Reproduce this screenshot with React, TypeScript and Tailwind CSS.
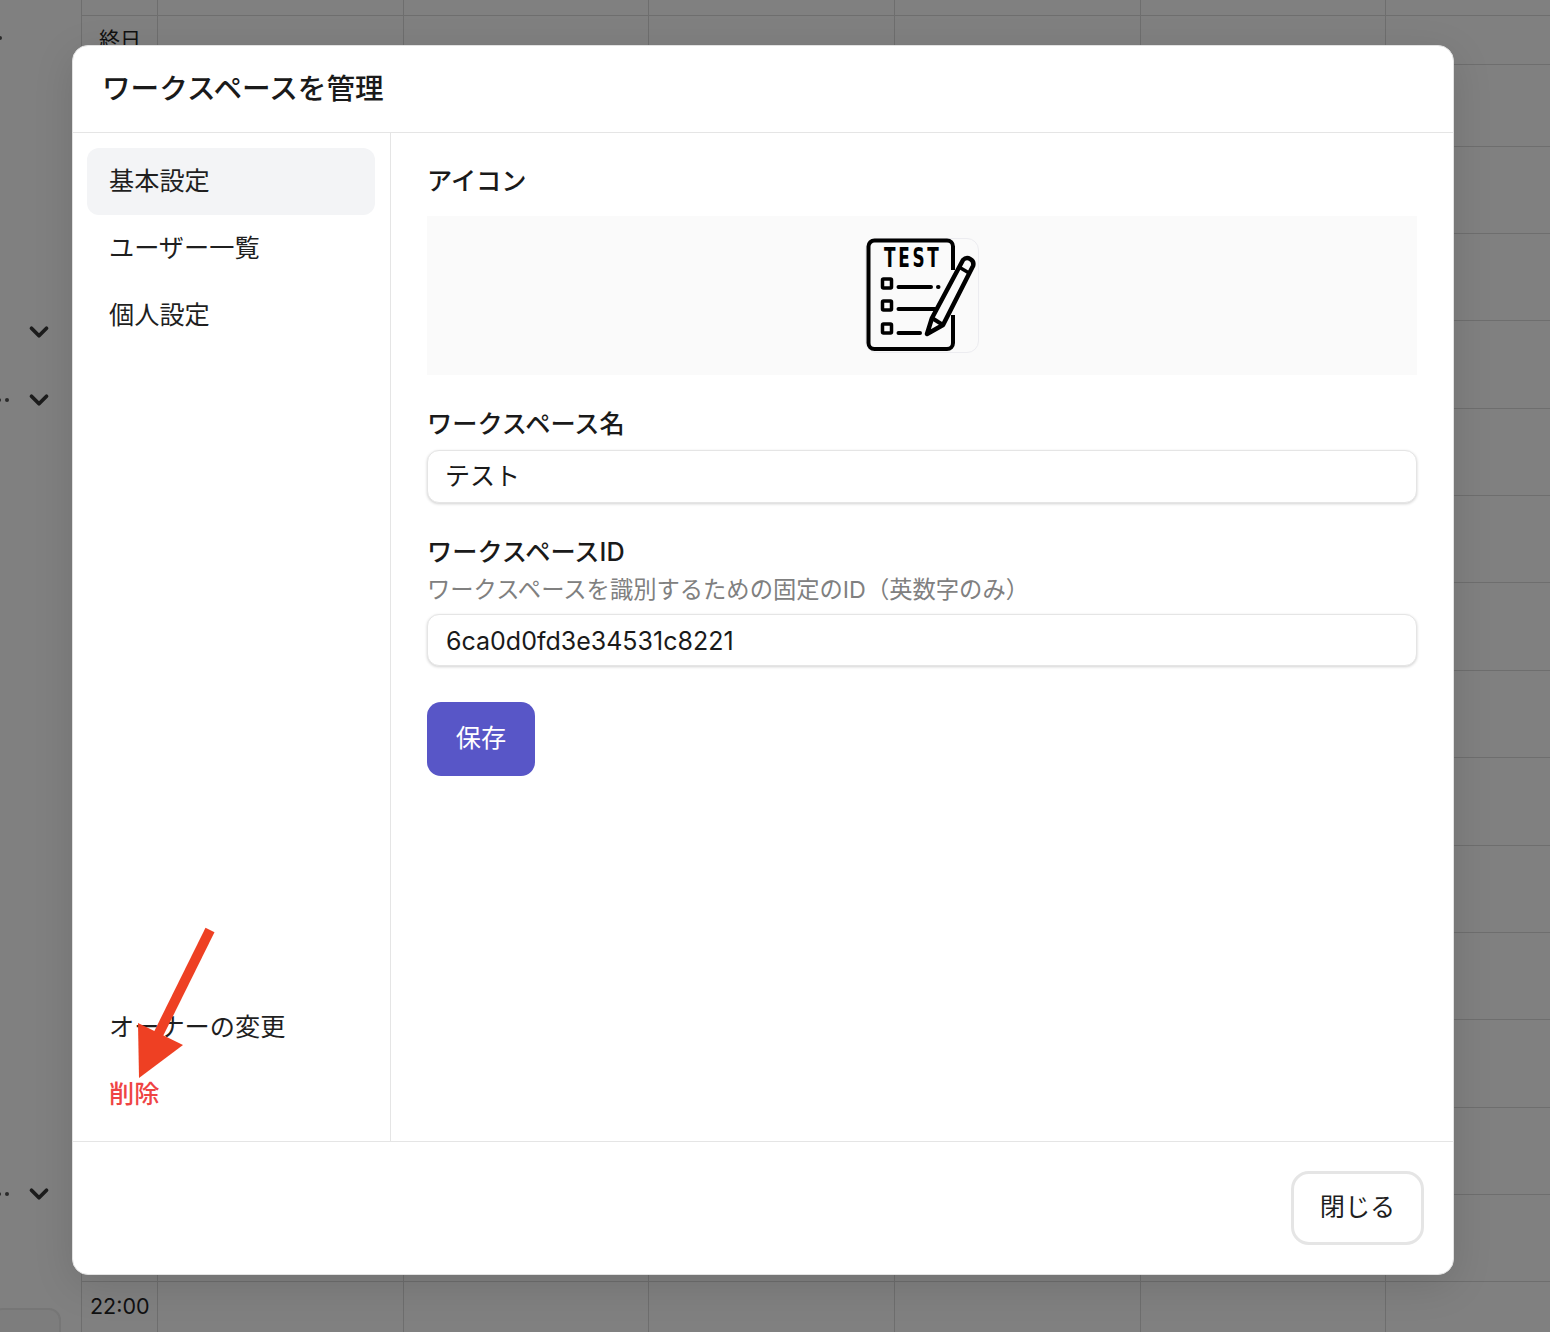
import React from 'react';
import { ChevronDown } from 'lucide-react';

const rowHeights = [16, 49, 82, 87, 87, 88, 87, 87, 88, 87, 88, 87, 87, 88, 87, 87, 51];
const colWidths = [76, 246, 245, 246, 246, 245, 165];

const font = { fontFamily: 'Inter, "Noto Sans CJK JP", sans-serif' };

const Dots = ({ count }: { count: number }) => (
  <div className="absolute left-[-3px] top-[13px] flex gap-[4px]">
    {Array.from({ length: count }).map((_, i) => (
      <span key={i} className="h-[4px] w-[4px] rounded-full bg-[#2a2a2a]" />
    ))}
  </div>
);

const Background = () => (
  <div className="flex h-[1332px] bg-[#808080] text-[#111]">
    <div className="relative flex w-[81px] shrink-0 flex-col items-end pr-[27px]">
      <div className="absolute left-[-2px] top-[36px]">
        <div className="h-[4px] w-[4px] rounded-full bg-[#2a2a2a]" />
      </div>
      <ChevronDown className="mt-[317px] h-[30px] w-[30px] text-[#1c1c1c]" strokeWidth={3} />
      <div className="relative mt-[38px] flex h-[30px] w-full items-center justify-end">
        <Dots count={2} />
        <ChevronDown className="h-[30px] w-[30px] text-[#1c1c1c]" strokeWidth={3} />
      </div>
      <div className="relative mt-[764px] flex h-[30px] w-full items-center justify-end">
        <Dots count={2} />
        <ChevronDown className="h-[30px] w-[30px] text-[#1c1c1c]" strokeWidth={3} />
      </div>
      <div className="absolute bottom-[-20px] left-[-10px] h-[44px] w-[71px] rounded-xl border-2 border-[#767676] bg-[#7d7d7d]" />
    </div>
    <div className="flex-1 border-l border-[#6e6e6e]">
      {rowHeights.map((h, r) => (
        <div key={r} className="flex border-b border-[#6e6e6e]" style={{ height: h }}>
          {colWidths.map((w, c) => (
            <div key={c} className="border-r border-[#6e6e6e] last:border-r-0" style={{ width: w }}>
              {c === 0 && r === 1 && (
                <div className="pl-[17px] pt-[8px] text-[21px] leading-[32px]" style={font}>終日</div>
              )}
              {c === 0 && r === 16 && (
                <div className="pl-[8px] pt-[8px] text-[21.5px] leading-[32px]" style={font}>22:00</div>
              )}
            </div>
          ))}
        </div>
      ))}
    </div>
  </div>
);

const WorkspaceIcon = () => (
  <div className="h-[115px] w-[114px] rounded-xl border border-[#ececf0]">
    <svg width="114" height="115" viewBox="0 0 114 115" fill="none" className="-ml-px -mt-px">
      <path d="M88 77V105a6 6 0 0 1-6 6H9.5a6 6 0 0 1-6-6V8.5a6 6 0 0 1 6-6H82a6 6 0 0 1 6 6V32" stroke="#000" strokeWidth="4" />
      <text transform="translate(19 29) scale(0.72 1)" fontFamily='"DejaVu Sans Condensed", "DejaVu Sans", sans-serif' fontWeight="700" fontSize="26" textLength="76" lengthAdjust="spacing" fill="#000">TEST</text>
      <rect x="17.5" y="41" width="9" height="9" rx="1" stroke="#000" strokeWidth="3.5" />
      <rect x="17.5" y="63" width="9" height="9" rx="1" stroke="#000" strokeWidth="3.5" />
      <rect x="17.5" y="86" width="9" height="9" rx="1" stroke="#000" strokeWidth="3.5" />
      <path d="M33.5 49H66M73 49H73.5M33.5 71H70M33.5 95H55" stroke="#000" strokeWidth="4" strokeLinecap="round" />
      <path d="M62 96L67 80L98 22A6 6 0 0 1 108 28L78 87Z" fill="#fafafa" stroke="#000" strokeWidth="4.5" strokeLinejoin="round" />
      <path d="M67 80L78 87" stroke="#000" strokeWidth="4" />
      <path d="M94 29L104 35" stroke="#000" strokeWidth="3.5" />
    </svg>
  </div>
);

const Field = ({ value, boxClass }: { value: string; boxClass: string }) => (
  <input
    type="text"
    readOnly
    value={value}
    className={`block w-full rounded-xl border border-[#e5e5e5] bg-white text-[25px] text-[#1a1a1a] shadow-[0_1px_3px_rgba(0,0,0,0.18)] outline-none ${boxClass}`}
  />
);

const NavItem = ({ label, className = 'text-[#1f1f1f]' }: { label: string; className?: string }) => (
  <div className={`flex h-[67px] items-center rounded-xl px-[22px] text-[25.2px] ${className}`}>{label}</div>
);

const App = () => {
  return (
    <div className="relative h-[1332px] w-[1550px] overflow-hidden" style={font}>
      <Background />

      <div className="absolute left-[72px] top-[45px] flex h-[1230px] w-[1382px] flex-col rounded-2xl border border-[#e2e2e2] bg-white text-[#1a1a1a] shadow-[0_10px_40px_rgba(0,0,0,0.12)]">
        <div className="flex h-[87px] shrink-0 items-center border-b border-[#e5e5e5] pl-[29px] text-[28.6px] font-medium">
          ワークスペースを管理
        </div>

        <div className="flex min-h-0 flex-1">
          <div className="flex w-[318px] shrink-0 flex-col justify-between border-r border-[#e5e5e5] pb-[13px] pl-[14px] pr-[15px] pt-[15px]">
            <div>
              <NavItem label="基本設定" className="bg-[#f3f4f6] text-[#1f1f1f]" />
              <NavItem label="ユーザー一覧" />
              <NavItem label="個人設定" />
            </div>
            <div>
              <NavItem label="オーナーの変更" />
              <NavItem label="削除" className="font-medium text-[#ef4444]" />
            </div>
          </div>

          <div className="flex-1 px-[36px] pt-[30px]">
            <div className="mb-[17px] text-[25.2px] font-medium leading-[36px]">アイコン</div>
            <div className="flex h-[159px] items-start justify-center bg-[#fafafa] pt-[22px]">
              <WorkspaceIcon />
            </div>

            <div className="mb-[8px] mt-[31px] text-[25.2px] font-medium leading-[36px]">ワークスペース名</div>
            <Field value="テスト" boxClass="h-[53px] pb-[5px] pl-[17px] pr-[18px]" />

            <div className="mt-[31px] text-[25.2px] font-medium leading-[36px]">ワークスペースID</div>
            <div className="mb-[6px] mt-[2px] text-[23.3px] leading-[36px] text-[#808080]">
              ワークスペースを識別するための固定のID（英数字のみ）
            </div>
            <Field value="6ca0d0fd3e34531c8221" boxClass="h-[52px] px-[18px] pt-[2px]" />

            <button className="mt-[36px] h-[74px] w-[108px] rounded-[14px] bg-[#5856c7] text-[25.2px] text-white">
              保存
            </button>
          </div>
        </div>

        <div className="flex h-[133px] shrink-0 items-start justify-end border-t border-[#e5e5e5] pr-[29px] pt-[29px]">
          <button className="h-[74px] w-[133px] rounded-[18px] border-[3px] border-[#e5e5e5] bg-white text-[25.2px] text-[#1f1f1f]">
            閉じる
          </button>
        </div>
      </div>

      {/* annotation arrow */}
      <svg className="absolute left-[130px] top-[920px]" width="100" height="170" viewBox="0 0 100 170" fill="none">
        <path d="M80 10L28 115" stroke="#ee4023" strokeWidth="10" />
        <path d="M8 103L53 125L9 158Z" fill="#ee4023" />
      </svg>
    </div>
  );
};

export default App;
